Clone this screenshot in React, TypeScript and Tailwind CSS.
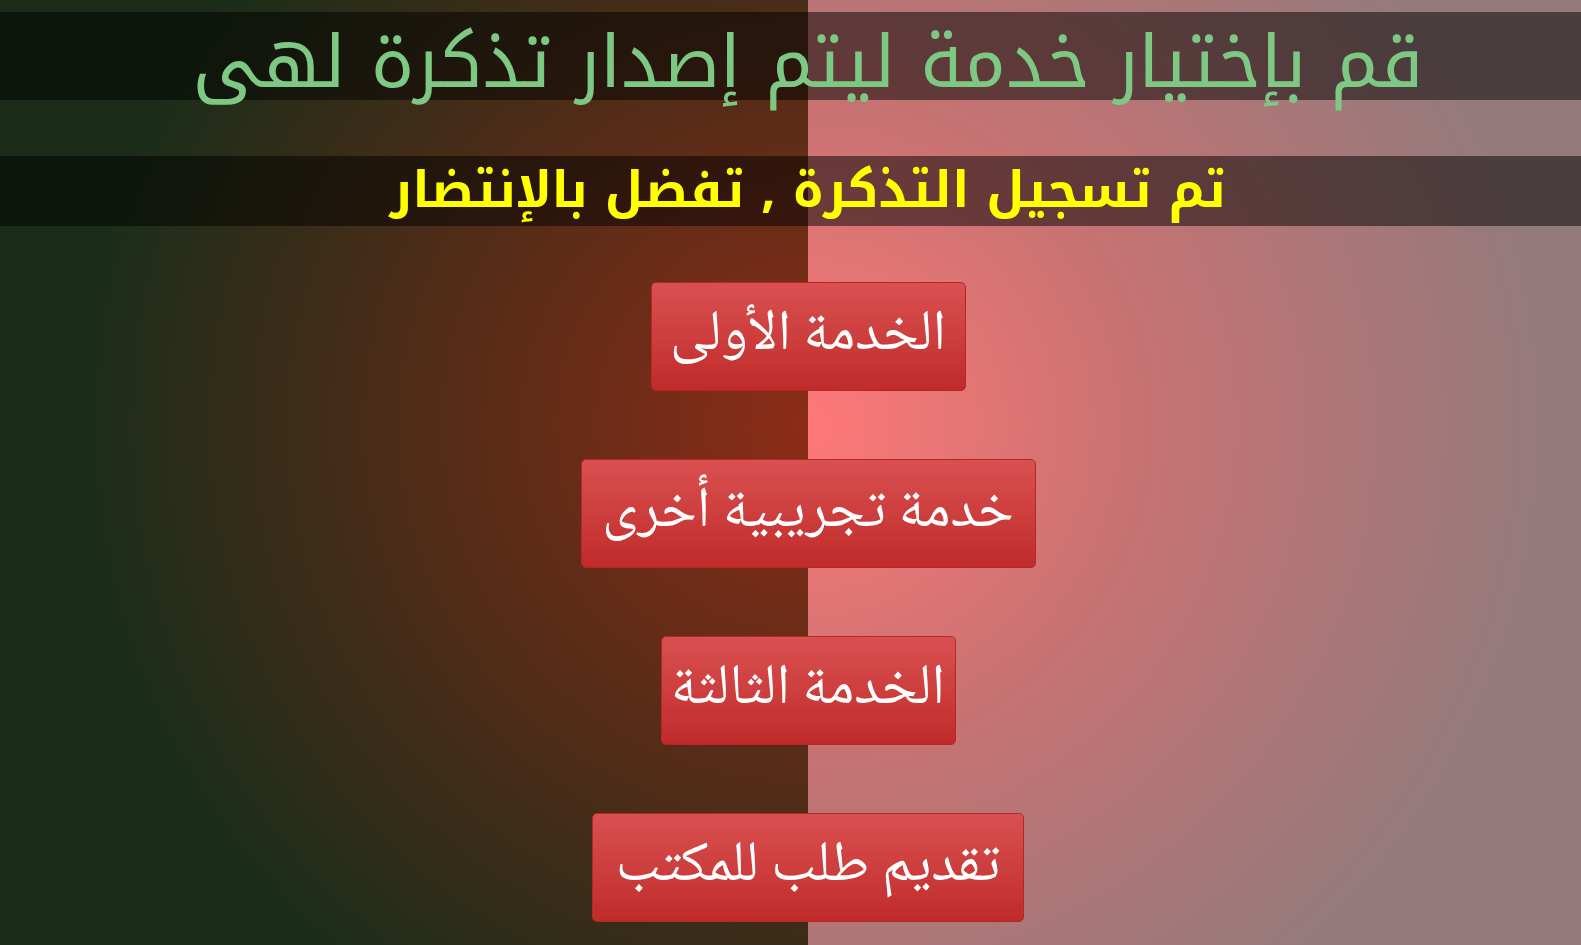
import React from 'react';

const services = [
  { label: 'الخدمة الأولى', width: 'w-[315px]' },
  { label: 'خدمة تجريبية أخرى', width: 'w-[455px]' },
  { label: 'الخدمة الثالثة', width: 'w-[295px]' },
  { label: 'تقديم طلب للمكتب', width: 'w-[432px]' },
];

const kufi = '"Noto Kufi Arabic", "Droid Arabic Kufi", "DejaVu Sans", sans-serif';
const naskh = '"Noto Naskh Arabic", "Amiri", "Scheherazade", "DejaVu Sans", serif';

const App = () => {
  return (
    <div className="relative w-full min-h-[945px]">
      {/* Background halves */}
      <div className="absolute inset-0 flex">
        <div className="w-[808px] h-full bg-[radial-gradient(ellipse_90%_75%_at_100%_45%,#8c2c17_0%,#5a2c18_45%,#1b2d19_100%)]" />
        <div className="flex-1 h-full bg-[radial-gradient(ellipse_95%_75%_at_0%_45%,#ff7878_0%,#c87272_45%,#957a7c_100%)]" />
      </div>

      <div dir="rtl" className="relative flex flex-col">
        <div className="mt-3 h-[88px] bg-black/50 flex items-start justify-center pl-[35px]">
          <h1 className="pt-[14px] text-[73px] leading-[74px] text-[#7dc983] whitespace-nowrap" style={{ fontFamily: kufi }}>
            قم بإختيار خدمة ليتم إصدار تذكرة لهى
          </h1>
        </div>

        <div className="mt-14 h-[70px] bg-black/50 flex items-center justify-center pl-[35px]">
          <h2 className="text-[50px] leading-[70px] font-bold text-[#ffff00] whitespace-nowrap" style={{ fontFamily: kufi }}>
            تم تسجيل التذكرة , تفضل بالإنتضار
          </h2>
        </div>

        <div className="mt-14 pl-[35px] flex flex-col items-center gap-[68px]">
          {services.map((s) => (
            <button
              key={s.label}
              className={`${s.width} h-[109px] rounded-[5px] border border-[#b52727] bg-gradient-to-b from-[#da5050] to-[#c02a2a] text-white text-[57px] leading-none`}
              style={{ fontFamily: naskh }}
            >
              {s.label}
            </button>
          ))}
        </div>
      </div>
    </div>
  );
};

export default App;
